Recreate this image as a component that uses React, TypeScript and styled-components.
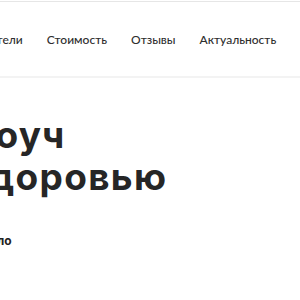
import React from "react";
import styled, { createGlobalStyle } from "styled-components";

const Global = createGlobalStyle`
  html, body { margin: 0; padding: 0; background: #fff; overflow: hidden; }
  body { width: 300px; height: 300px; }
`;

const Page = styled.div`
  width: 300px;
  height: 300px;
  overflow: hidden;
  background: #fff;
`;

const Header = styled.header`
  height: 74px;
  border-top: 1px solid #e6e6e6;
  margin-top: 1px;
  border-bottom: 2px solid #f3f3f3;
  display: flex;
  align-items: center;
  overflow: hidden;
`;

const Nav = styled.nav`
  display: flex;
  align-items: center;
  gap: 24px;
  margin-left: -64px;
  white-space: nowrap;
`;

const NavLink = styled.a`
  font-family: Lato, "Open Sans", sans-serif;
  font-size: 12px;
  font-weight: 500;
  color: #2e2e2e;
  text-decoration: none;
`;

const Hero = styled.section`
  padding-top: 36px;
  margin-left: -31px;
`;

const Title = styled.h1`
  margin: 0;
  font-family: Inter, "Noto Sans", sans-serif;
  font-size: 37px;
  font-weight: 700;
  line-height: 42px;
  color: #262626;
  letter-spacing: 1.3px;
`;

const Note = styled.p`
  margin: 35px 0 0 -2px;
  font-family: Inter, "Noto Sans", sans-serif;
  font-size: 12px;
  font-weight: 700;
  color: #222;
`;

export default function App() {
  return (
    <Page>
      <Global />
      <Header>
        <Nav>
          <NavLink href="#">Преподаватели</NavLink>
          <NavLink href="#">Стоимость</NavLink>
          <NavLink href="#">Отзывы</NavLink>
          <NavLink href="#">Актуальность</NavLink>
          <NavLink href="#">Программа</NavLink>
        </Nav>
      </Header>
      <Hero>
        <Title>
          Коуч
          <br />
          здоровью
        </Title>
        <Note>Начало</Note>
      </Hero>
    </Page>
  );
}
